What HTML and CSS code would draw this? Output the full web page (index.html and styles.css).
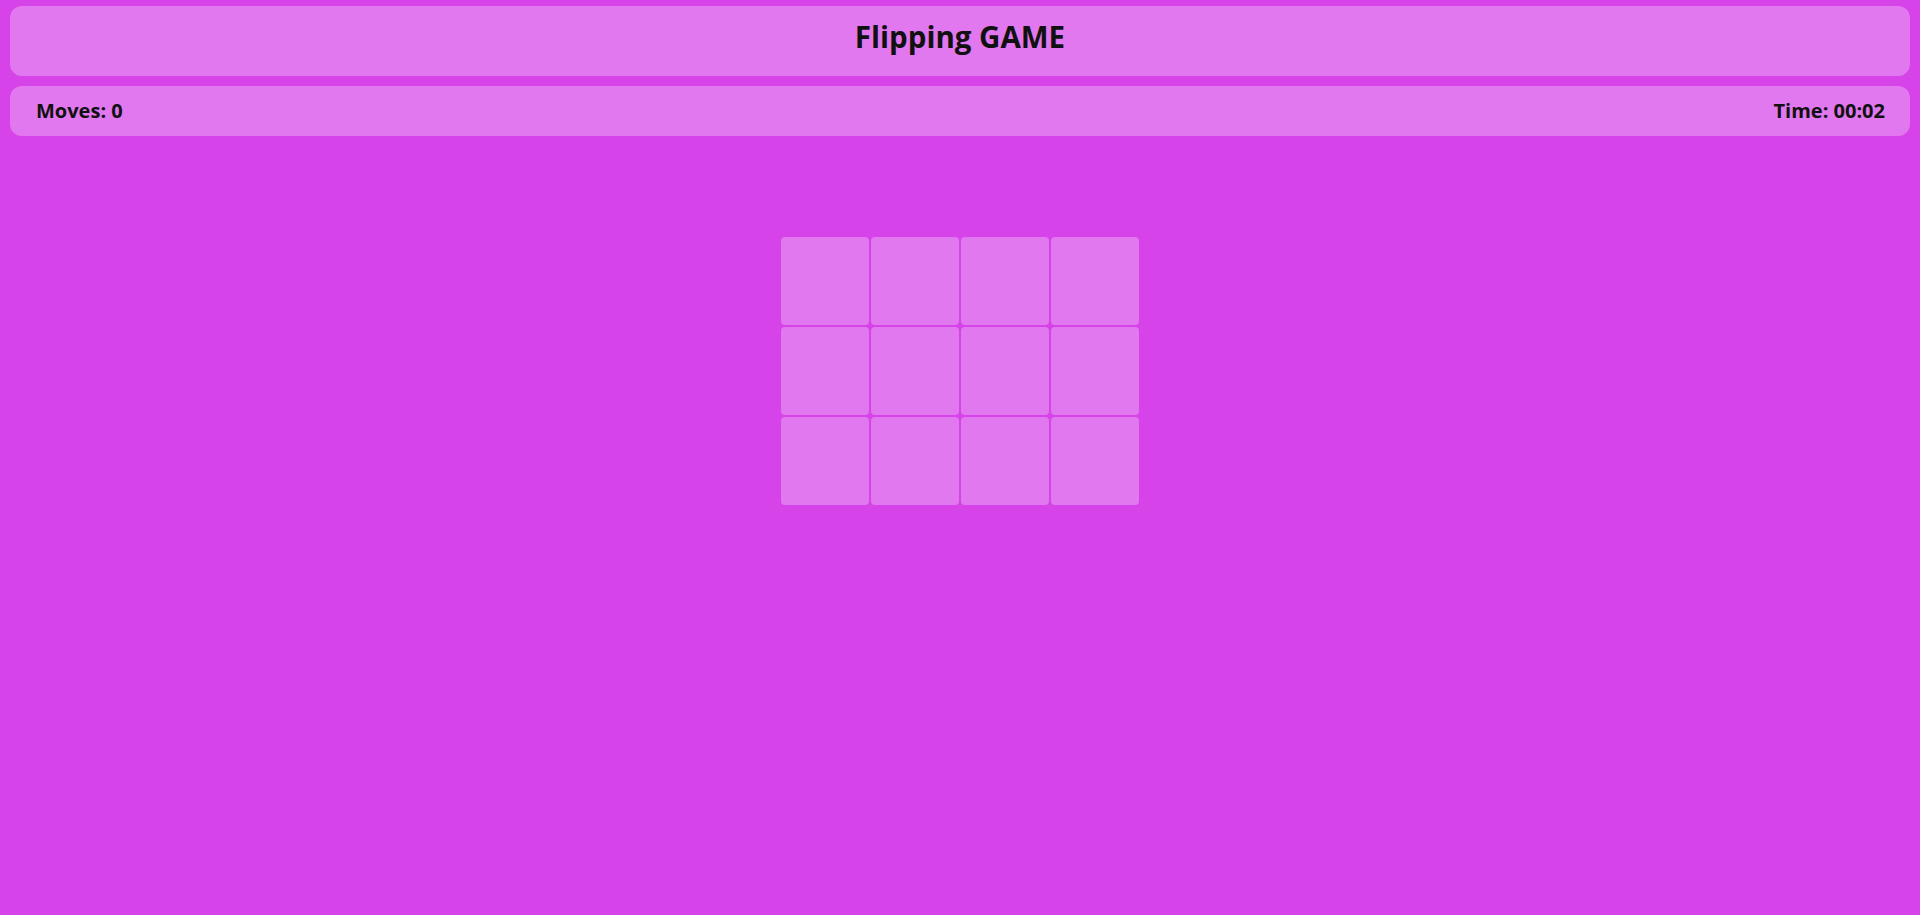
FILE: index.html
```html
<!DOCTYPE html>
<html lang="en">
<head>
<meta charset="utf-8">
<title>Flipping GAME</title>
<link rel="stylesheet" href="styles.css">
</head>
<body>
<div class="app">
  <header class="title-bar"><h1 class="title">Flipping GAME</h1></header>
  <div class="stats">
    <div class="stat">Moves: <span class="val">0</span></div>
    <div class="stat">Time: <span class="val">00:02</span></div>
  </div>
  <main class="board">
    <div class="grid">
      <div class="tile"></div><div class="tile"></div><div class="tile"></div><div class="tile"></div>
      <div class="tile"></div><div class="tile"></div><div class="tile"></div><div class="tile"></div>
      <div class="tile"></div><div class="tile"></div><div class="tile"></div><div class="tile"></div>
    </div>
  </main>
</div>
</body>
</html>
```
FILE: styles.css
```css
html, body {
  margin: 0;
  padding: 0;
  background: #d643e9;
  height: 100%;
}
body {
  font-family: "Open Sans", "Noto Sans", sans-serif;
  color: #111;
}
.app {
  padding: 6px 10px;
  display: flex;
  flex-direction: column;
  gap: 10px;
}
.title-bar {
  background: #e278ef;
  border-radius: 12px;
  height: 70px;
  box-sizing: border-box;
  padding-bottom: 8px;
  display: flex;
  align-items: center;
  justify-content: center;
}
.title {
  margin: 0;
  font-size: 29.5px;
  font-weight: 700;
  line-height: 1.2;
}
.stats {
  background: #e278ef;
  border-radius: 12px;
  height: 50px;
  box-sizing: border-box;
  padding: 0 25px 2px 26px;
  display: flex;
  align-items: center;
  justify-content: space-between;
  font-size: 20px;
  font-weight: 700;
}
.board {
  display: flex;
  justify-content: center;
  padding-top: 91px;
}
.grid {
  display: grid;
  grid-template-columns: repeat(4, 88px);
  grid-auto-rows: 88px;
  gap: 2px;
}
.tile {
  background: #e278ef;
  border-radius: 4px;
}
```
